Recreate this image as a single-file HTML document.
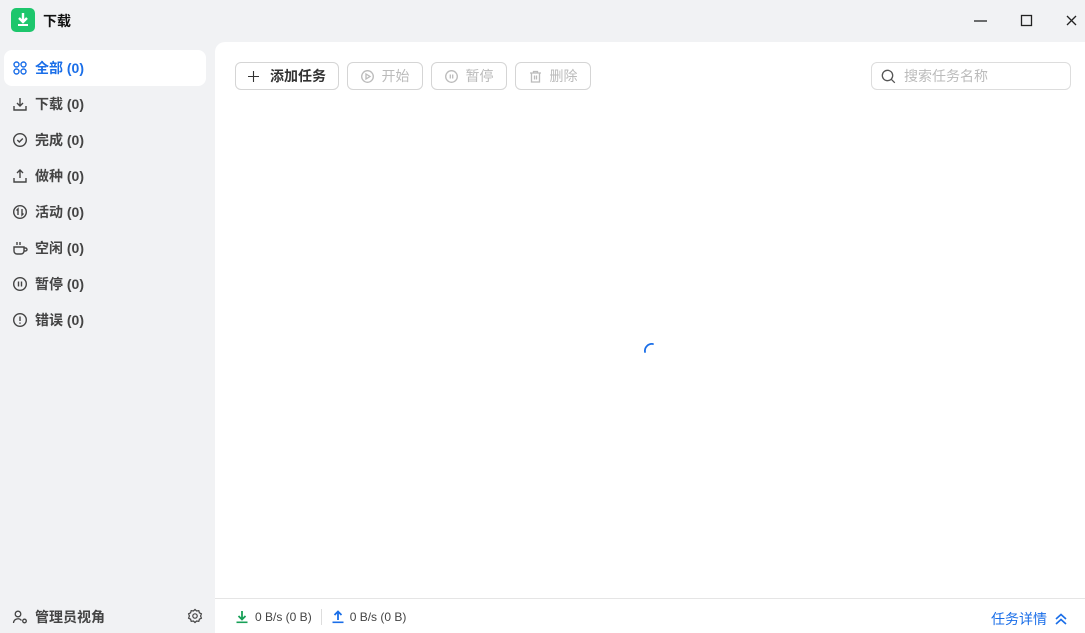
<!DOCTYPE html><html><head><meta charset="utf-8"><style>
*{margin:0;padding:0;box-sizing:border-box}
body{width:1085px;height:633px;background:#f1f2f4;font-family:"Liberation Sans","Noto Sans CJK SC",sans-serif;position:relative;overflow:hidden;color:#333}
.abs{position:absolute}
.logo{left:11px;top:8px;width:24px;height:24px;border-radius:5px;background:#1dc66c}
.title{left:43px;top:11px;font-size:14px;font-weight:bold;color:#111}
.item{position:absolute;left:4px;width:202px;height:36px;border-radius:8px;display:flex;align-items:center;padding-left:8px;font-size:14px;font-weight:bold;color:#444}
.item svg{width:16px;height:16px;margin-right:7px;fill:none;stroke:#444;stroke-width:1.4}
.item.act{background:#fff;color:#1a6ee8}
.item.act svg{stroke:#1a6ee8}
.main{left:215px;top:42px;width:870px;height:591px;background:#fff;border-top-left-radius:10px}
.btn{position:absolute;top:62px;height:28px;border:1px solid #d5d5d5;border-radius:6px;display:flex;align-items:center;justify-content:center;font-size:14px;color:#bbb}
.btn svg{width:13px;height:13px;margin-right:8px;fill:none;stroke:#bbb;stroke-width:1.3}
</style></head><body>
<div class="abs logo"><svg width="24" height="24" viewBox="0 0 24 24"><path d="M12 5v8M8 10l4 4 4-4" stroke="#fff" stroke-width="2.4" fill="none"/><rect x="7" y="16" width="10" height="2" fill="#fff"/></svg></div>
<div class="abs title">下载</div>
<svg class="abs" style="left:974px;top:14px" width="110" height="14"><path d="M0 7h13" stroke="#222" stroke-width="1.3"/><rect x="47.5" y="1.5" width="10" height="10" fill="none" stroke="#222" stroke-width="1.3"/><path d="M93 2l9 9M102 2l-9 9" stroke="#222" stroke-width="1.3"/></svg>

<div class="item act" style="top:50px"><svg viewBox="0 0 16 16"><circle cx="4.5" cy="4.5" r="2.5"/><circle cx="11.5" cy="4.5" r="2.5"/><circle cx="4.5" cy="11.5" r="2.5"/><circle cx="11.5" cy="11.5" r="2.5"/></svg>全部 (0)</div>
<div class="item" style="top:86px"><svg viewBox="0 0 16 16"><path d="M8 2v8M5 7l3 3 3-3M2 10v4h12v-4"/></svg>下载 (0)</div>
<div class="item" style="top:122px"><svg viewBox="0 0 16 16"><circle cx="8" cy="8" r="6.3"/><path d="M5.3 8l2 2 3.5-3.5"/></svg>完成 (0)</div>
<div class="item" style="top:158px"><svg viewBox="0 0 16 16"><path d="M8 10V2M5 5l3-3 3 3M2 10v4h12v-4"/></svg>做种 (0)</div>
<div class="item" style="top:194px"><svg viewBox="0 0 16 16"><circle cx="8" cy="8" r="6.3"/><path d="M6 11V5L4.5 6.5M10 5v6l1.5-1.5"/></svg>活动 (0)</div>
<div class="item" style="top:230px"><svg viewBox="0 0 16 16"><path d="M2 7h10v4a3 3 0 0 1-3 3H5a3 3 0 0 1-3-3zM12 8h1.5a1.5 1.5 0 0 1 0 3H12M5 2v3M8 2v3"/></svg>空闲 (0)</div>
<div class="item" style="top:266px"><svg viewBox="0 0 16 16"><circle cx="8" cy="8" r="6.3"/><path d="M6.5 5.5v5M9.5 5.5v5"/></svg>暂停 (0)</div>
<div class="item" style="top:302px"><svg viewBox="0 0 16 16"><circle cx="8" cy="8" r="6.3"/><path d="M8 4.5v4.5M8 10.5v1.2"/></svg>错误 (0)</div>

<div class="abs" style="left:12px;top:607px;display:flex;align-items:center;font-size:14px;font-weight:bold;color:#444"><svg width="16" height="16" viewBox="0 0 16 16" fill="none" stroke="#444" stroke-width="1.3" style="margin-right:7px"><circle cx="6" cy="5" r="2.8"/><path d="M1.5 14a4.5 4.5 0 0 1 8-2.5"/><circle cx="12.5" cy="12" r="1.8"/></svg>管理员视角</div>
<svg class="abs" style="left:187px;top:608px" width="16" height="16" viewBox="0 0 16 16" fill="none" stroke="#444" stroke-width="1.2"><path d="M8 1.5l1.6 1.5 2.2-.3.6 2.1 2 1-.8 2.2.8 2.2-2 1-.6 2.1-2.2-.3L8 14.5 6.4 13l-2.2.3-.6-2.1-2-1 .8-2.2-.8-2.2 2-1 .6-2.1 2.2.3z"/><circle cx="8" cy="8" r="2.2"/></svg>

<div class="abs main"></div>
<div class="btn" style="left:235px;width:104px;color:#333;font-weight:bold"><svg viewBox="0 0 13 13" style="stroke:#333;width:11px;height:11px;margin-right:11px"><path d="M6.5 0v13M0 6.5h13"/></svg>添加任务</div>
<div class="btn" style="left:347px;width:76px"><svg viewBox="0 0 13 13"><circle cx="6.5" cy="6.5" r="5.8"/><path d="M5 4v5l4-2.5z"/></svg>开始</div>
<div class="btn" style="left:431px;width:76px"><svg viewBox="0 0 13 13"><circle cx="6.5" cy="6.5" r="5.8"/><path d="M5.3 4.5v4M7.7 4.5v4"/></svg>暂停</div>
<div class="btn" style="left:515px;width:76px"><svg viewBox="0 0 13 13"><path d="M1 3h11M4.5 3V1.5h4V3M2.5 3v9h8V3M5.5 5.5v4M7.5 5.5v4"/></svg>删除</div>
<div class="btn" style="left:871px;width:200px;justify-content:flex-start;padding-left:9px;color:#bbb;border-color:#ddd"><svg viewBox="0 0 15 15" style="width:15px;height:15px;stroke:#555;margin-right:8px"><circle cx="6.5" cy="6.5" r="5.2"/><path d="M10.3 10.3l3.5 3.5"/></svg>搜索任务名称</div>

<svg class="abs" style="left:642px;top:340px" width="20" height="20"><path d="M3 12A7 7 0 0 1 11 4" stroke="#1a6ee8" stroke-width="1.8" fill="none" stroke-linecap="round"/></svg>

<div class="abs" style="left:215px;top:598px;width:870px;height:1px;background:#e5e5e5"></div>
<div class="abs" style="left:235px;top:609px;display:flex;align-items:center;font-size:12px;color:#444">
<svg width="14" height="14" viewBox="0 0 14 14" style="margin-right:6px"><path d="M7 1v8M3.5 6l3.5 3.5L10.5 6" stroke="#18a058" stroke-width="1.8" fill="none"/><rect x="1.5" y="11.5" width="11" height="1.6" fill="#18a058"/></svg>0 B/s (0 B)
<span style="width:1px;height:16px;background:#ddd;margin:0 9px"></span>
<svg width="14" height="14" viewBox="0 0 14 14" style="margin-right:5px"><path d="M7 10V2M3.5 5L7 1.5 10.5 5" stroke="#1a6ee8" stroke-width="1.8" fill="none"/><rect x="1.5" y="11.5" width="11" height="1.6" fill="#1a6ee8"/></svg>0 B/s (0 B)</div>
<div class="abs" style="left:991px;top:609px;font-size:14px;color:#1a6ee8;display:flex;align-items:center">任务详情<svg width="14" height="14" viewBox="0 0 14 14" style="margin-left:7px" fill="none" stroke="#1a6ee8" stroke-width="1.6"><path d="M2 7l5-4.5L12 7M2 12l5-4.5 5 4.5"/></svg></div>
</body></html>
